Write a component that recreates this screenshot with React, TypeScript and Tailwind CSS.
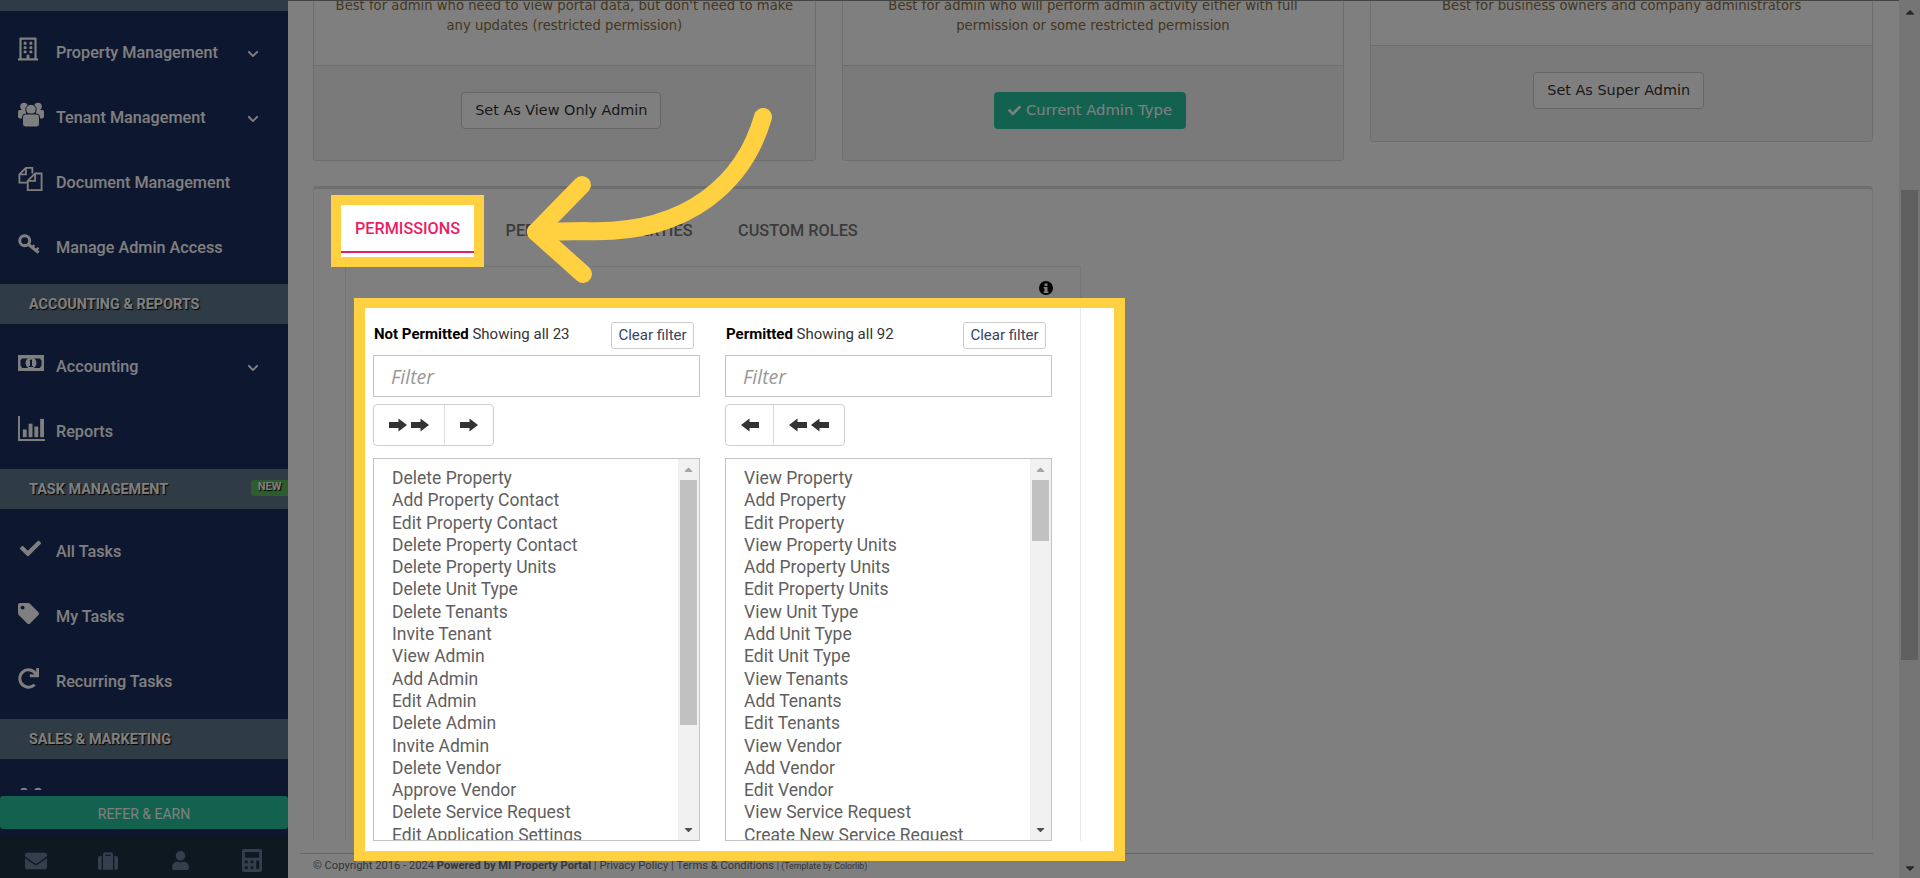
import React from 'react';
import {
  FaRegBuilding,
  FaCheck,
  FaTag,
  FaRedo,
  FaEnvelope,
  FaSuitcase,
  FaUser,
  FaCalculator,
  FaChevronDown,
  FaCaretUp,
  FaCaretDown,
} from 'react-icons/fa';

const notPermitted = [
  'Delete Property',
  'Add Property Contact',
  'Edit Property Contact',
  'Delete Property Contact',
  'Delete Property Units',
  'Delete Unit Type',
  'Delete Tenants',
  'Invite Tenant',
  'View Admin',
  'Add Admin',
  'Edit Admin',
  'Delete Admin',
  'Invite Admin',
  'Delete Vendor',
  'Approve Vendor',
  'Delete Service Request',
  'Edit Application Settings',
];

const permitted = [
  'View Property',
  'Add Property',
  'Edit Property',
  'View Property Units',
  'Add Property Units',
  'Edit Property Units',
  'View Unit Type',
  'Add Unit Type',
  'Edit Unit Type',
  'View Tenants',
  'Add Tenants',
  'Edit Tenants',
  'View Vendor',
  'Add Vendor',
  'Edit Vendor',
  'View Service Request',
  'Create New Service Request',
];

function UsersIcon() {
  return (
    <svg viewBox="0 0 26 25" className="w-[26px] h-[25px]" fill="currentColor">
      <circle cx="6" cy="4.500" r="3.800" />
      <circle cx="20" cy="4.500" r="3.800" />
      <path d="M0 9.500Q0 8 2 8h6v8.500H2Q0 16.500 0 14.500zM26 9.500Q26 8 24 8h-6v8.500h6q2 0 2-2z" />
      <circle cx="13" cy="7.500" r="5.200" stroke="#1c2e60" strokeWidth="1" />
      <path d="M4.500 15q0-3 3-3h11q3 0 3 3v7q0 3-3 3h-11q-3 0-3-3z" stroke="#1c2e60" strokeWidth="1" />
    </svg>
  );
}

function FilesIcon() {
  return (
    <svg viewBox="0 0 26 26" className="w-[25px] h-[24px]" fill="none" stroke="currentColor" strokeWidth="2">
      <path d="M15 7V1H8L1 8v9h9" />
      <path d="M8 1v7H1" />
      <path d="M18 7h7v18H10V15z" />
      <path d="M18 7v8h-8" />
    </svg>
  );
}

function KeyIcon() {
  return (
    <svg viewBox="0 0 24 22" className="w-[23px] h-[21px]" fill="none" stroke="currentColor">
      <circle cx="7" cy="7" r="5.200" strokeWidth="3.200" />
      <path d="M11 11l10.500 8.500" strokeWidth="3.200" />
      <path d="M18.500 17l3-2.500M15 14l2-2.500" strokeWidth="2.400" />
    </svg>
  );
}

function MoneyIcon() {
  return (
    <svg viewBox="0 0 26 18" className="w-[26px] h-[18px]" fill="currentColor">
      <path fillRule="evenodd" d="M0 1h26v16H0zM4 4.500a2.500 2.500 0 0 1-1.500 1.500v6A2.500 2.500 0 0 1 4 14h18a2.500 2.500 0 0 1 1.500-2V6A2.500 2.500 0 0 1 22 4.500z" />
      <circle cx="13" cy="9" r="5.500" />
      <path d="M11.500 6.500L13 5.500h1V12h1.200v1h-4.400v-1H12V7z" fill="#1c2e60" />
    </svg>
  );
}

function BarsIcon() {
  return (
    <svg viewBox="0 0 28 26" className="w-[27px] h-[25px]" fill="currentColor">
      <path d="M0 0h2v24h26v2H0z" />
      <rect x="5" y="14" width="4" height="8" />
      <rect x="11" y="8" width="4" height="14" />
      <rect x="17" y="11" width="4" height="11" />
      <rect x="23" y="3" width="4" height="19" />
    </svg>
  );
}

function ArrowGlyph({ left }: { left?: boolean }) {
  return (
    <svg viewBox="0 0 18 14" className={left ? 'w-[18px] h-[14px] -scale-x-100' : 'w-[18px] h-[14px]'} fill="#333">
      <path d="M0 4h9.500V0.500L18 7l-8.500 6.500V10H0z" />
    </svg>
  );
}

function SideItem({ icon, label, chevron }: { icon: React.ReactNode; label: string; chevron?: boolean }) {
  return (
    <div className="h-[65px] pt-[2px] flex items-center pl-[18px] pr-[29px] text-white">
      <div className="w-[38px] -mt-[9px] shrink-0 flex items-center">{icon}</div>
      <span className="flex-1 text-[16.2px] font-medium">{label}</span>
      {chevron && <FaChevronDown className="w-[12px] h-[12px]" />}
    </div>
  );
}

function SideBand({ label, badge }: { label: string; badge?: boolean }) {
  return (
    <div className="h-[40px] pt-[1px] bg-[#5e768a] flex items-center justify-between pl-[29px] text-white">
      <span className="text-[14.4px] font-bold [text-shadow:1px_1px_1px_#000]">{label}</span>
      {badge && (
        <span className="w-[37px] h-[16px] rounded-l-[3px] bg-[#5cb85c] flex items-center justify-center text-[11px] font-bold -mt-[4px] [text-shadow:1px_1px_1px_#000]">
          NEW
        </span>
      )}
    </div>
  );
}

function Sidebar() {
  return (
    <aside className="w-[288px] h-[878px] shrink-0 bg-[#1c2e60] flex flex-col">
      <div className="h-[11px] shrink-0 bg-[#5e768a]" />
      <div className="h-[779px] overflow-hidden shrink-0">
        <div className="pt-[9px] pb-[4px]">
          <SideItem icon={<FaRegBuilding className="w-[20px] h-[24px]" />} label="Property Management" chevron />
          <SideItem icon={<UsersIcon />} label="Tenant Management" chevron />
          <SideItem icon={<FilesIcon />} label="Document Management" />
          <SideItem icon={<KeyIcon />} label="Manage Admin Access" />
        </div>
        <SideBand label="ACCOUNTING & REPORTS" />
        <div className="pt-[10px] pb-[5px]">
          <SideItem icon={<MoneyIcon />} label="Accounting" chevron />
          <SideItem icon={<BarsIcon />} label="Reports" />
        </div>
        <SideBand label="TASK MANAGEMENT" badge />
        <div className="pt-[10px] pb-[5px]">
          <SideItem icon={<FaCheck className="w-[21px] h-[21px] ml-[2px]" />} label="All Tasks" />
          <SideItem icon={<FaTag className="w-[21px] h-[21px]" />} label="My Tasks" />
          <SideItem icon={<FaRedo className="w-[21px] h-[21px]" />} label="Recurring Tasks" />
        </div>
        <SideBand label="SALES & MARKETING" />
        <div className="pt-[28px] pl-[18px] text-white">
          <UsersIcon />
        </div>
      </div>
      <div className="pt-[6px] shrink-0">
        <div className="h-[33px] pt-[4px] rounded-[3px] bg-[#26c4a0] flex items-center justify-center text-[14px] text-white">
          REFER &amp; EARN
        </div>
      </div>
      <div className="mt-[6px] pt-[8px] flex-1 bg-[#1c3040] grid grid-cols-4 items-center text-[#667f9a]">
        <FaEnvelope className="w-[22px] h-[22px] justify-self-center" />
        <FaSuitcase className="w-[22px] h-[20px] justify-self-center" />
        <FaUser className="w-[17px] h-[19px] justify-self-center" />
        <FaCalculator className="w-[20px] h-[23px] justify-self-center" />
      </div>
    </aside>
  );
}

function AdminCard({
  lines,
  topClass,
  footerClass,
  children,
}: {
  lines: string[];
  topClass: string;
  footerClass: string;
  children: React.ReactNode;
}) {
  return (
    <div className="border-x border-b border-[#dddddd] rounded-b-[4px] bg-white overflow-hidden">
      <div className={`${topClass} overflow-hidden border-b border-[#dddddd]`}>
        <div className="-mt-[5px] text-center text-[13.2px] leading-[20px] text-[#8a6d3b] font-['DejaVu_Sans',sans-serif]">
          {lines.map((l) => (
            <div key={l}>{l}</div>
          ))}
        </div>
      </div>
      <div className={`${footerClass} pt-[26px] pr-[6px] bg-[#f5f5f5] flex justify-center items-start`}>{children}</div>
    </div>
  );
}

function AdminButton({ label }: { label: string }) {
  return (
    <button className="h-[37px] px-[13px] rounded-[4px] border border-[#cccccc] bg-white text-[14.4px] text-[#333333] font-['DejaVu_Sans',sans-serif]">
      {label}
    </button>
  );
}

function MainContent() {
  return (
    <main className="flex-1 h-[878px] overflow-hidden flex flex-col bg-white">
      <div className="h-px shrink-0 bg-[#888888]" />
      <div className="pl-[25px] pr-[26px]">
        <div className="grid grid-cols-3 gap-x-[26px] items-start h-[159px]">
          <AdminCard
            topClass="h-[65px]"
            footerClass="h-[94px]"
            lines={["Best for admin who need to view portal data, but don't need to make", 'any updates (restricted permission)']}
          >
            <AdminButton label="Set As View Only Admin" />
          </AdminCard>
          <AdminCard
            topClass="h-[65px]"
            footerClass="h-[94px]"
            lines={['Best for admin who will perform admin activity either with full', 'permission or some restricted permission']}
          >
            <button className="h-[37px] px-[14px] rounded-[4px] bg-[#26c4a0] text-[14.8px] text-white flex items-center gap-[5px] font-['DejaVu_Sans',sans-serif]">
              <FaCheck className="w-[13px] h-[13px]" />
              Current Admin Type
            </button>
          </AdminCard>
          <AdminCard
            topClass="h-[45px]"
            footerClass="h-[95px]"
            lines={['Best for business owners and company administrators']}
          >
            <AdminButton label="Set As Super Admin" />
          </AdminCard>
        </div>
        <div className="mt-[26px] h-[654px] rounded-t-[4px] border-t-[3px] border-x border-t-[#dcdcdc] border-x-[#e7eaec] pl-[31px]">
          <div className="h-[77px] pt-[16px] -ml-[4px] flex gap-x-[17.5px] text-[16.3px] font-medium text-[#777777]">
            <div className="w-[133px] h-[52px] flex items-center justify-center">PERMISSIONS</div>
            <div className="h-[52px] px-[14px] flex items-center">PERMITTED PROPERTIES</div>
            <div className="h-[52px] px-[14px] flex items-center">CUSTOM ROLES</div>
          </div>
          <div className="w-[736px] h-[575px] border-x border-t border-[#e7eaec] flex justify-end pr-[27px] pt-[14px]">
            <svg viewBox="0 0 14 14" className="w-[14px] h-[14px]">
              <circle cx="7" cy="7" r="7" fill="#000" />
              <rect x="5.500" y="2.500" width="3" height="2.500" fill="#fff" />
              <path d="M4.500 6h4v4.500h1V12h-5v-1.500h1V7.500h-1z" fill="#fff" />
            </svg>
          </div>
        </div>
      </div>
      <div className="mt-[13px] ml-[12px] mr-[26px] border-t border-[#cccccc] pt-[3px] pl-[13px] h-[23px] bg-white flex items-center text-[11.2px] text-[#676a6c]">
        © Copyright 2016 - 2024&nbsp;<b className="font-bold">Powered by MI Property Portal</b>&nbsp;|&nbsp;Privacy Policy&nbsp;|&nbsp;Terms &amp; Conditions&nbsp;
        <span className="text-[8.8px]">| (Template by Colorlib)</span>
      </div>
    </main>
  );
}

function PageScrollbar() {
  return (
    <div className="relative w-[21px] h-[878px] shrink-0 bg-[#ebebeb] flex flex-col items-center">
      <FaCaretUp className="mt-[5px] w-[14px] h-[14px] text-[#505050]" />
      <div className="mt-[171px] w-[17px] h-[470px] bg-[#c1c1c1]" />
      <FaCaretDown className="absolute bottom-[3px] w-[14px] h-[14px] text-[#505050]" />
    </div>
  );
}

function ListScrollbar({ thumbClass }: { thumbClass: string }) {
  return (
    <div className="relative w-[21px] shrink-0 bg-[#f1f1f1] flex flex-col items-center">
      <FaCaretUp className="mt-[4px] w-[13px] h-[13px] text-[#a3a3a3]" />
      <div className={`${thumbClass} mt-[4px] w-[17px] bg-[#c1c1c1]`} />
      <FaCaretDown className="absolute bottom-[4px] w-[13px] h-[13px] text-[#505050]" />
    </div>
  );
}

function FilterColumn({
  title,
  count,
  items,
  thumbClass,
  reversed,
}: {
  title: string;
  count: number;
  items: string[];
  thumbClass: string;
  reversed?: boolean;
}) {
  return (
    <div className="w-[327px]">
      <div className="h-[47px] flex items-start justify-between pr-[6px]">
        <div className="pl-px pt-[15px] text-[15px] leading-[22px] text-[#333333]">
          <b className="font-bold text-black">{title}</b> Showing all {count}
        </div>
        <button className="mt-[14px] w-[83px] h-[27px] rounded-[3px] border border-[#cccccc] text-[15px] text-[#34455f]">
          Clear filter
        </button>
      </div>
      <input
        readOnly
        placeholder="Filter"
        className="w-full h-[42px] border border-[#c4c4c4] pl-[17px] text-[19.5px] italic font-['Open_Sans',sans-serif] placeholder:text-[#999999] outline-none"
      />
      <div className="mt-[7px] w-fit h-[42px] flex rounded-[4px] border border-[#cfcfcf]">
        {reversed ? (
          <>
            <div className="w-[48px] flex items-center justify-center border-r border-[#dddddd]">
              <ArrowGlyph left />
            </div>
            <div className="w-[70px] flex items-center justify-center gap-[4px]">
              <ArrowGlyph left />
              <ArrowGlyph left />
            </div>
          </>
        ) : (
          <>
            <div className="w-[71px] flex items-center justify-center gap-[4px] border-r border-[#dddddd]">
              <ArrowGlyph />
              <ArrowGlyph />
            </div>
            <div className="w-[48px] flex items-center justify-center">
              <ArrowGlyph />
            </div>
          </>
        )}
      </div>
      <div className="mt-[12px] h-[383px] border border-[#c4c4c4] flex overflow-hidden">
        <div className="flex-1 pt-[8px] pl-[18px] overflow-hidden text-[17.5px] leading-[22.3px] text-[#5f5f5f] whitespace-nowrap">
          {items.map((item) => (
            <div key={item}>{item}</div>
          ))}
        </div>
        <ListScrollbar thumbClass={thumbClass} />
      </div>
    </div>
  );
}

function Overlays() {
  return (
    <>
      <div className="absolute inset-0 bg-black/50" />
      <div className="absolute left-[331px] top-[195px] w-[153px] h-[72px] border-[10px] border-[#ffd03f] bg-white">
        <div className="h-[48px] pt-[3px] border-b-[2px] border-[#e91e63] flex items-center justify-center text-[16.2px] font-medium text-[#e91e63]">
          PERMISSIONS
        </div>
      </div>
      <div className="absolute left-[354px] top-[298px] w-[771px] h-[563px] border-[11px] border-y-[10px] border-[#ffd03f] bg-white flex">
        <div className="w-[715px] pl-[8px] flex gap-x-[25px]">
          <FilterColumn title="Not Permitted" count={23} items={notPermitted} thumbClass="h-[245px]" />
          <FilterColumn title="Permitted" count={92} items={permitted} thumbClass="h-[61px]" reversed />
        </div>
        <div className="w-px h-[533px] bg-[#e7eaec]" />
      </div>
      <svg className="absolute inset-0 w-full h-full pointer-events-none" viewBox="0 0 1920 878" fill="none" stroke="#ffd03f" strokeWidth="18" strokeLinecap="round" strokeLinejoin="round">
        <path d="M763 117C745 180 690 235 585 231L536 232" />
        <path d="M582 185L536 232L583 274" />
      </svg>
    </>
  );
}

export default function App() {
  return (
    <div className="relative w-[1920px] h-[878px] overflow-hidden flex font-['Roboto',sans-serif]">
      <Sidebar />
      <MainContent />
      <PageScrollbar />
      <Overlays />
    </div>
  );
}
